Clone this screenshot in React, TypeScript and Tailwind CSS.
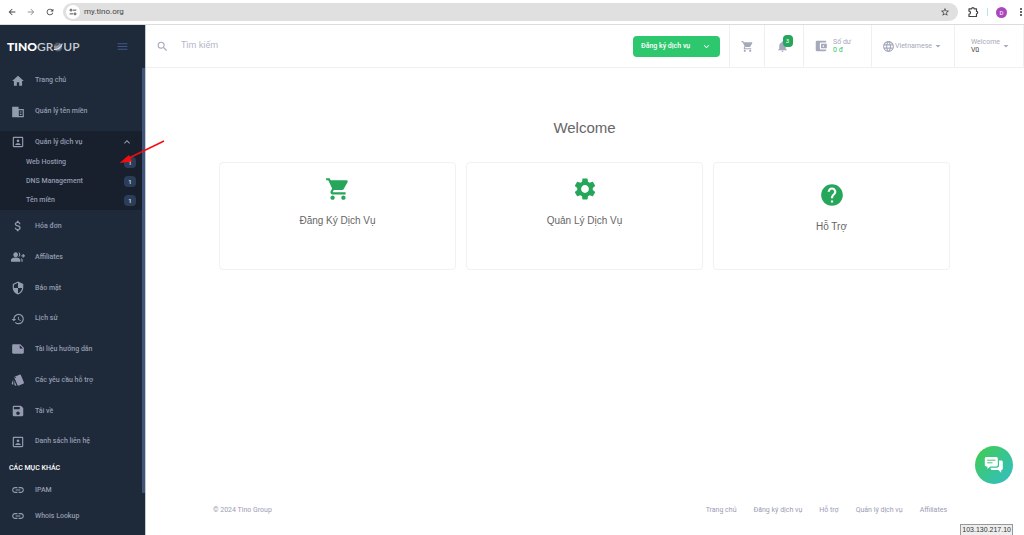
import type { ReactNode } from "react";
import type { IconType } from "react-icons";
import {
  MdAccountBalanceWallet,
  MdArrowBack,
  MdArrowDropDown,
  MdArrowForward,
  MdAttachMoney,
  MdGroupAdd,
  MdHelp,
  MdHistory,
  MdHome,
  MdKeyboardArrowDown,
  MdKeyboardArrowUp,
  MdLanguage,
  MdLink,
  MdMenu,
  MdMoreVert,
  MdNote,
  MdNotifications,
  MdPortrait,
  MdRefresh,
  MdSave,
  MdSearch,
  MdSecurity,
  MdSettings,
  MdShoppingCart,
  MdStarOutline,
  MdStyle,
} from "react-icons/md";

function BuildingIcon({ className }: { className?: string }) {
  return (
    <svg viewBox="0 0 24 24" className={className} fill="currentColor" aria-hidden="true">
      <path d="M2 3h11v18H2z" />
      <path
        fillRule="evenodd"
        d="M12 7h10v14H12zM13 9v10h7V9zM15 11h3v2h-3zM15 15h3v2h-3z"
      />
    </svg>
  );
}

function TuneIcon() {
  return (
    <svg viewBox="0 0 12 12" className="size-2" fill="none" stroke="#444" strokeWidth="1.4" aria-hidden="true">
      <circle cx="3" cy="3.2" r="1.5" />
      <path d="M6 3.2h5M1 8.8h5" />
      <circle cx="9" cy="8.8" r="1.5" />
    </svg>
  );
}

function PuzzleIcon() {
  return (
    <svg viewBox="0 0 12 12" className="size-3" fill="none" stroke="#444" strokeWidth="1.2" strokeLinejoin="round" aria-hidden="true">
      <path d="M2 2.8h2.7a1.2 1.2 0 0 1 2.4 0h2.4v2.6a1.2 1.2 0 0 1 0 2.4v2.7H2V8.2a1.5 1.5 0 0 0 0-3z" />
    </svg>
  );
}

function ChatIcon() {
  return (
    <svg viewBox="0 0 20 18" className="h-[18px] w-5" aria-hidden="true">
      <path
        fill="#fff"
        d="M15 4.5h2.2c1 0 1.6.6 1.6 1.6v6.3c0 .9-.6 1.5-1.6 1.6v2.8L14.4 14H8.2c-1 0-1.6-.6-1.6-1.5v-.8h6.2c1.4 0 2.2-.8 2.2-2.1z"
      />
      <path
        fill="#fff"
        d="M2.4.9h9.8c1 0 1.6.6 1.6 1.6v6.3c0 1-.6 1.6-1.6 1.6H6.2L3.4 13v-2.6h-1c-1 0-1.6-.6-1.6-1.6V2.5c0-1 .6-1.6 1.6-1.6z"
      />
      <path stroke="#3cc77c" strokeWidth="1" d="M3.2 4.2h8.2M3.2 6.8h5.3" />
    </svg>
  );
}

function GlobeO() {
  return (
    <svg viewBox="0 0 12 12" className="size-[10px]" aria-hidden="true">
      <circle cx="6" cy="6" r="5" fill="#8a929c" />
      <path d="M1.5 4.5C4 5 7 4 8 1.5 5.5.5 2.5 1.5 1.5 4.5z" fill="#49535f" />
      <path d="M1 9C5 9.5 9.5 7 11.2 2" stroke="#dfe3e8" strokeWidth="1.3" fill="none" />
      <path d="M4 10.5c3 .3 6-1.5 6.8-4.5" stroke="#3d4855" strokeWidth="1" fill="none" />
    </svg>
  );
}

type Item = { label: string; icon: IconType | typeof BuildingIcon };

const topItems: Item[] = [
  { label: "Trang chủ", icon: MdHome },
  { label: "Quản lý tên miền", icon: BuildingIcon },
];
const services = ["Web Hosting", "DNS Management", "Tên miền"];
const mainItems: Item[] = [
  { label: "Hóa đơn", icon: MdAttachMoney },
  { label: "Affiliates", icon: MdGroupAdd },
  { label: "Bảo mật", icon: MdSecurity },
  { label: "Lịch sử", icon: MdHistory },
  { label: "Tài liệu hướng dẫn", icon: MdNote },
  { label: "Các yêu cầu hỗ trợ", icon: MdStyle },
  { label: "Tải về", icon: MdSave },
  { label: "Danh sách liên hệ", icon: MdPortrait },
];
const otherItems = ["IPAM", "Whois Lookup"];
const footerLinks = ["Trang chủ", "Đăng ký dịch vụ", "Hỗ trợ", "Quản lý dịch vụ", "Affiliates"];

function NavLink({ label, icon: Icon }: Item) {
  return (
    <a href="#" className="flex items-center gap-[10px] pl-[11px]">
      <Icon className="size-[14px] shrink-0" />
      {label}
    </a>
  );
}

function BrowserBar() {
  return (
    <div className="flex h-[25px] shrink-0 items-center border-b border-[#dcdcdc] bg-white text-[#444]">
      <div className="flex w-[63px] items-center gap-[9px] pl-[7px]">
        <button aria-label="Back"><MdArrowBack className="size-[10px]" /></button>
        <button aria-label="Forward" className="text-[#999]"><MdArrowForward className="size-[10px]" /></button>
        <button aria-label="Reload"><MdRefresh className="size-[10px]" /></button>
      </div>
      <div className="flex h-[18px] flex-1 items-center rounded-full bg-[#e0e0e0] pr-2 pl-[3px]">
        <button aria-label="Site settings" className="flex size-[14px] items-center justify-center rounded-full bg-white">
          <TuneIcon />
        </button>
        <input
          aria-label="Address"
          defaultValue="my.tino.org"
          className="ml-1 min-w-0 flex-1 bg-transparent text-[8px] text-[#444] outline-none"
        />
        <button aria-label="Bookmark"><MdStarOutline className="size-[10px]" /></button>
      </div>
      <button aria-label="Extensions" className="ml-[9px]"><PuzzleIcon /></button>
      <span className="ml-2 h-2 w-px bg-[#b5e6ee]" />
      <button className="ml-2 flex size-[11px] items-center justify-center rounded-full bg-[#ab47bc] text-[6px] text-white">D</button>
      <button aria-label="Browser menu" className="ml-2"><MdMoreVert className="-mr-[3px] size-3" /></button>
    </div>
  );
}

function Sidebar() {
  return (
    <aside className="relative flex w-[146px] shrink-0 flex-col border-r border-[#c3cad5] bg-[#1e2a3a] text-[7px] font-medium text-[#949bb0]">
      <div className="flex h-10 items-center justify-between pt-[3px] pr-4 pl-[7px]">
        <a href="#" className="flex items-center font-[Lato] text-[12px] leading-none text-white">
          <span className="font-black">TINO</span>
          <span className="font-semibold text-[#c5cad1]">GR</span>
          <GlobeO />
          <span className="font-semibold text-[#c5cad1]">UP</span>
        </a>
        <button aria-label="Toggle menu" className="text-[#40598a]"><MdMenu className="size-[13px]" /></button>
      </div>
      <span className="absolute top-[43px] right-0 h-[425px] w-[3px] bg-[#3f5478]" />
      <nav className="flex flex-col" aria-label="Menu">
        <div className="grid h-[66px] grid-rows-[31px_31px]">
          {topItems.map((i) => <NavLink key={i.label} {...i} />)}
        </div>
        <div className="mr-[3px] h-[79px] bg-[#18202d]">
          <button className="flex h-[22px] w-full items-center gap-[10px] pr-[9px] pl-[11px]">
            <MdPortrait className="size-[14px]" />
            Quản lý dịch vụ
            <MdKeyboardArrowUp className="ml-auto size-3" />
          </button>
          {services.map((s) => (
            <a key={s} href="#" className="flex h-[19px] items-center justify-between pr-[6px] pl-[26px]">
              {s}
              <span className="flex h-[11px] w-3 items-center justify-center rounded bg-[#2b3d59] text-[6px] font-bold text-[#c8d0de]">1</span>
            </a>
          ))}
        </div>
        <div className="mt-px grid h-[246px] grid-rows-8">
          {mainItems.map((i) => <NavLink key={i.label} {...i} />)}
        </div>
        <h2 className="flex h-5 items-center pt-[3px] pl-[9px] text-[7px] text-white">CÁC MỤC KHÁC</h2>
        <div className="grid h-[52px] grid-rows-2">
          {otherItems.map((l) => <NavLink key={l} label={l} icon={MdLink} />)}
        </div>
      </nav>
    </aside>
  );
}

function Header() {
  return (
    <header className="flex h-[43px] items-stretch border-b border-[#f0f0f2] text-[7px] text-[#a5a9bb]">
      <label className="flex flex-1 items-center gap-3 pl-[10px]">
        <MdSearch className="size-[13px]" />
        <input aria-label="Tìm kiếm" placeholder="Tìm kiếm" className="min-w-0 flex-1 bg-transparent text-[9px] outline-none placeholder:text-[#b4b8c8]" />
      </label>
      <div className="flex items-center pr-[9px]">
        <button className="flex h-[21px] w-[87px] items-center justify-between rounded bg-[#2dc76d] px-2 font-medium text-white">
          Đăng ký dịch vụ
          <MdKeyboardArrowDown className="size-[11px]" />
        </button>
      </div>
      <button aria-label="Giỏ hàng" className="flex w-[35px] items-center justify-center border-l border-[#f0f0f2]">
        <MdShoppingCart className="size-[13px]" />
      </button>
      <button aria-label="Thông báo" className="flex w-[39px] items-center justify-center border-l border-[#f0f0f2]">
        <span className="relative mr-1">
          <MdNotifications className="size-[13px]" />
          <span className="absolute -top-[5px] left-[7px] flex h-3 w-[10px] items-center justify-center rounded bg-[#26a65b] text-[6px] text-white">3</span>
        </span>
      </button>
      <a href="#" className="flex w-[68px] items-center gap-[5px] border-l border-[#f0f0f2] pl-[10px] leading-[8px]">
        <MdAccountBalanceWallet className="size-[14px]" />
        <span className="flex flex-col">
          Số dư
          <span className="text-[#2dc76d]">0 đ</span>
        </span>
      </a>
      <button className="flex w-[83px] items-center border-l border-[#f0f0f2] pl-[10px]">
        <MdLanguage className="size-[13px]" />
        Vietnamese
        <MdArrowDropDown className="size-3" />
      </button>
      <button className="flex w-[70px] items-center border-x border-[#f0f0f2] pl-4 text-left leading-[8px]">
        <span className="flex flex-col">
          Welcome
          <span className="text-[#444]">Vũ</span>
        </span>
        <MdArrowDropDown className="size-3" />
      </button>
    </header>
  );
}

function Card({ icon, label, low }: { icon: ReactNode; label: string; low?: boolean }) {
  return (
    <a
      href="#"
      className={`flex h-[108px] flex-col items-center gap-[11px] rounded border border-[#f1f1f3] text-[10px] leading-4 text-[#666] ${low ? "pt-[19px]" : "pt-[13px]"}`}
    >
      <span className="text-[#26a65b]">{icon}</span>
      {label}
    </a>
  );
}

export default function App() {
  return (
    <div className="flex min-h-screen flex-col bg-white font-[Roboto,sans-serif]">
      <BrowserBar />
      <div className="relative flex flex-1">
        <Sidebar />
        <div className="flex min-w-0 flex-1 flex-col">
          <Header />
          <main className="flex-1 pt-[50px] pr-[74px] pl-[73px] font-['Liberation_Sans',sans-serif]">
            <h1 className="text-center text-[15px] leading-5 text-[#666]">Welcome</h1>
            <div className="mt-6 grid grid-cols-3 gap-[10px]">
              <Card icon={<MdShoppingCart className="size-[26px]" />} label="Đăng Ký Dịch Vụ" />
              <Card icon={<MdSettings className="size-[26px]" />} label="Quản Lý Dịch Vụ" />
              <Card icon={<MdHelp className="size-[26px]" />} label="Hỗ Trợ" low />
            </div>
          </main>
          <footer className="flex items-center justify-between pr-[77px] pb-5 pl-[67px] text-[7px] leading-[10px] text-[#9a9db4]">
            <span>© 2024 Tino Group</span>
            <nav className="flex gap-[17px]" aria-label="Footer">
              {footerLinks.map((l) => <a key={l} href="#">{l}</a>)}
            </nav>
          </footer>
        </div>

        <svg viewBox="0 0 46 24" className="pointer-events-none absolute top-[115px] left-[119px] h-6 w-[46px]" aria-hidden="true">
          <path d="M45 1L8 19" stroke="#f50d0d" strokeWidth="1.4" />
          <path d="M0.5 23L10 15L13 21.5z" fill="#f50d0d" />
        </svg>
        <button
          aria-label="Chat"
          className="absolute right-[11px] bottom-[51px] flex size-[38px] items-center justify-center rounded-full bg-linear-to-br from-[#43cc3d] to-[#35bcc4]"
        >
          <ChatIcon />
        </button>
        <div className="absolute right-[11px] bottom-0 flex h-[11px] items-center border border-b-0 border-[#999] bg-[#eee] px-px font-['Liberation_Sans',sans-serif] text-[7px] text-[#333]">
          103.130.217.10
        </div>
      </div>
    </div>
  );
}
